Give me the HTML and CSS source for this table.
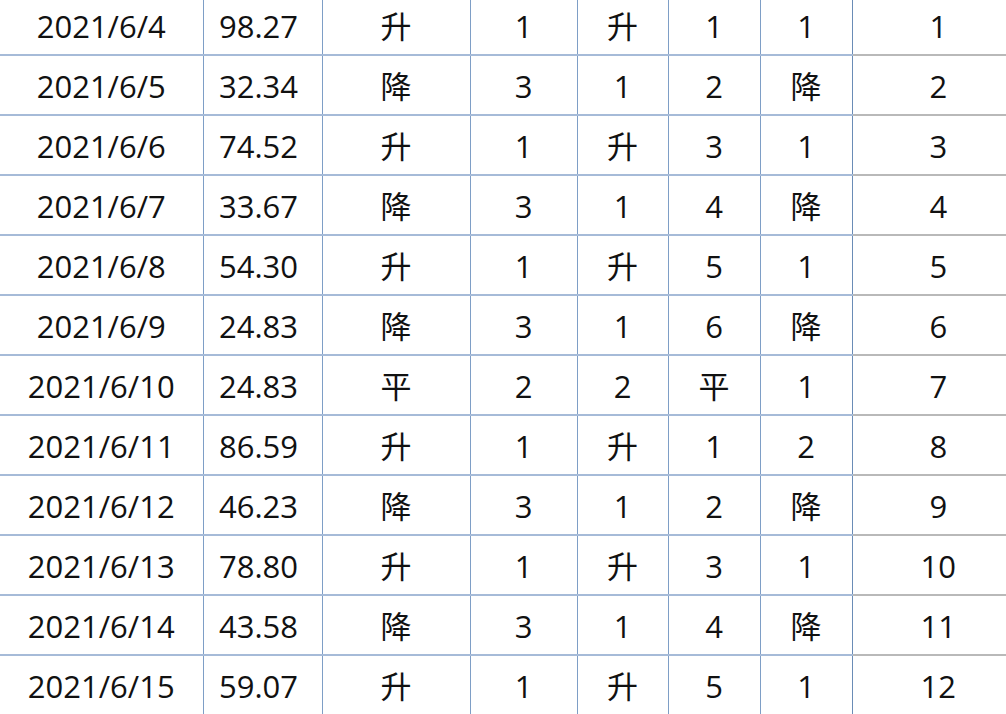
FILE: index.html
```html
<!DOCTYPE html>
<html lang="zh">
<head>
<meta charset="utf-8">
<link rel="stylesheet" href="styles.css">
</head>
<body>
<table class="sheet">
<colgroup>
<col class="c1"><col class="c2"><col class="c3"><col class="c4"><col class="c5"><col class="c6"><col class="c7"><col class="c8">
</colgroup>
<tbody>
<tr><td>2021/6/4</td><td class="num">98.27</td><td>升</td><td>1</td><td>升</td><td>1</td><td>1</td><td class="last">1</td></tr>
<tr><td>2021/6/5</td><td class="num">32.34</td><td>降</td><td>3</td><td>1</td><td>2</td><td>降</td><td class="last">2</td></tr>
<tr><td>2021/6/6</td><td class="num">74.52</td><td>升</td><td>1</td><td>升</td><td>3</td><td>1</td><td class="last">3</td></tr>
<tr><td>2021/6/7</td><td class="num">33.67</td><td>降</td><td>3</td><td>1</td><td>4</td><td>降</td><td class="last">4</td></tr>
<tr><td>2021/6/8</td><td class="num">54.30</td><td>升</td><td>1</td><td>升</td><td>5</td><td>1</td><td class="last">5</td></tr>
<tr><td>2021/6/9</td><td class="num">24.83</td><td>降</td><td>3</td><td>1</td><td>6</td><td>降</td><td class="last">6</td></tr>
<tr><td>2021/6/10</td><td class="num">24.83</td><td>平</td><td>2</td><td>2</td><td>平</td><td>1</td><td class="last">7</td></tr>
<tr><td>2021/6/11</td><td class="num">86.59</td><td>升</td><td>1</td><td>升</td><td>1</td><td>2</td><td class="last">8</td></tr>
<tr><td>2021/6/12</td><td class="num">46.23</td><td>降</td><td>3</td><td>1</td><td>2</td><td>降</td><td class="last">9</td></tr>
<tr><td>2021/6/13</td><td class="num">78.80</td><td>升</td><td>1</td><td>升</td><td>3</td><td>1</td><td class="last">10</td></tr>
<tr><td>2021/6/14</td><td class="num">43.58</td><td>降</td><td>3</td><td>1</td><td>4</td><td>降</td><td class="last">11</td></tr>
<tr><td>2021/6/15</td><td class="num">59.07</td><td>升</td><td>1</td><td>升</td><td>5</td><td>1</td><td class="last">12</td></tr>
</tbody>
</table>
</body>
</html>
```
FILE: styles.css
```css
html, body {
  margin: 0;
  padding: 0;
  background: #ffffff;
  overflow: hidden;
}
.sheet {
  border-collapse: collapse;
  table-layout: fixed;
  width: 1024px;
  margin-top: -4px;
  font-family: "Open Sans", "Noto Sans CJK SC", sans-serif;
  font-size: 31px;
  color: #111111;
}
.c1 { width: 203px; }
.c2 { width: 119px; }
.c3 { width: 148px; }
.c4 { width: 107px; }
.c5 { width: 91px; }
.c6 { width: 92px; }
.c7 { width: 92px; }
.c8 { width: 172px; }
.sheet td {
  height: 55px;
  padding: 3px 0 0;
  text-align: center;
  vertical-align: middle;
  line-height: 1;
  border-bottom: 2px solid #a6bbd8;
  border-right: 1px solid #7e9ec6;
  white-space: nowrap;
}
.sheet td.num {
  padding-right: 8px;
}
.sheet td:nth-child(7) {
  border-right-color: #6a8cb6;
}
.sheet td.last {
  border-bottom-color: #b9b9b9;
  border-right: none;
}
```
